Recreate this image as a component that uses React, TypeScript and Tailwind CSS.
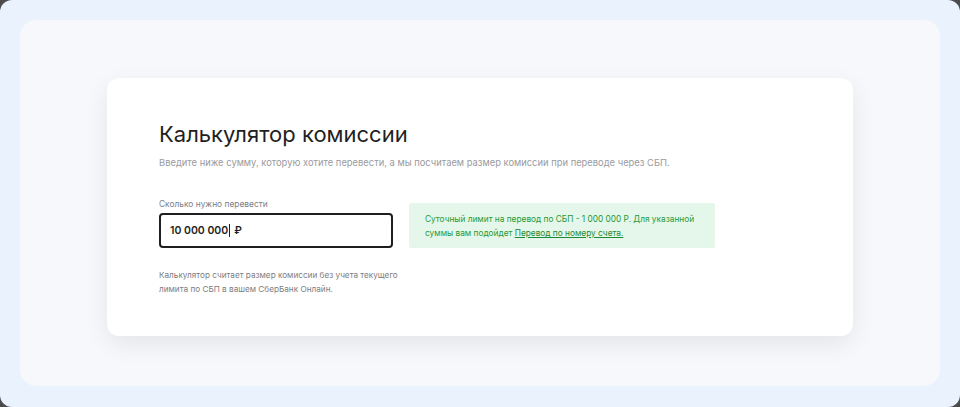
import React from 'react';

const App: React.FC = () => {
  return (
    <div className="w-[960px] h-[407px] bg-[#4b4b4d]">
      <div className="w-full h-full rounded-[12px] bg-[#e9f2fd] p-[20px] font-['Inter',sans-serif]">
        <div className="h-[366px] rounded-[16px] bg-[#f6f8fb] flex justify-center pt-[58px]">
          <div className="w-[746px] h-[258px] bg-white rounded-[12px] shadow-[0_8px_24px_rgba(0,0,0,0.08)] pl-[52px] pt-[40px]">
            <h1 className="text-[22px] leading-[32px] text-[#1f1f22] font-normal whitespace-nowrap">
              Калькулятор комиссии
            </h1>
            <p className="mt-[6px] text-[9.4px] leading-[14px] text-[#9a9aa0] whitespace-nowrap">
              Введите ниже сумму, которую хотите перевести, а мы посчитаем размер комиссии при переводе через СБП.
            </p>

            <div className="mt-[28px] flex gap-[16px]">
              <div className="w-[234px]">
                <div className="text-[8.4px] leading-[12px] text-[#7d7d82] whitespace-nowrap">Сколько нужно перевести</div>
                <div className="mt-[3px] h-[35px] border-2 border-[#1f1f22] rounded-[4px] flex items-center pl-[9px] text-[10.5px] font-semibold text-[#1f1f22]">
                  10 000 000
                  <span className="w-px h-[13px] bg-[#1f1f22] ml-[1px] mr-[4px]" />
                  ₽
                </div>
                <p className="mt-[20px] text-[8.2px] leading-[14px] text-[#7d7d82] whitespace-nowrap">
                  Калькулятор считает размер комиссии без учета текущего
                  <br />
                  лимита по СБП в вашем СберБанк Онлайн.
                </p>
              </div>

              <div className="mt-[5px] w-[306px] h-[45px] bg-[#e5f6ea] rounded-[2px] pl-[16px] pt-[9px] text-[8.3px] leading-[14px] text-[#1f9a37] whitespace-nowrap">
                Суточный лимит на перевод по СБП - 1 000 000 Р. Для указанной
                <br />
                суммы вам подойдет <span className="underline text-[#1b8a33]">Перевод по номеру счета.</span>
              </div>
            </div>
          </div>
        </div>
      </div>
    </div>
  );
};

export default App;
